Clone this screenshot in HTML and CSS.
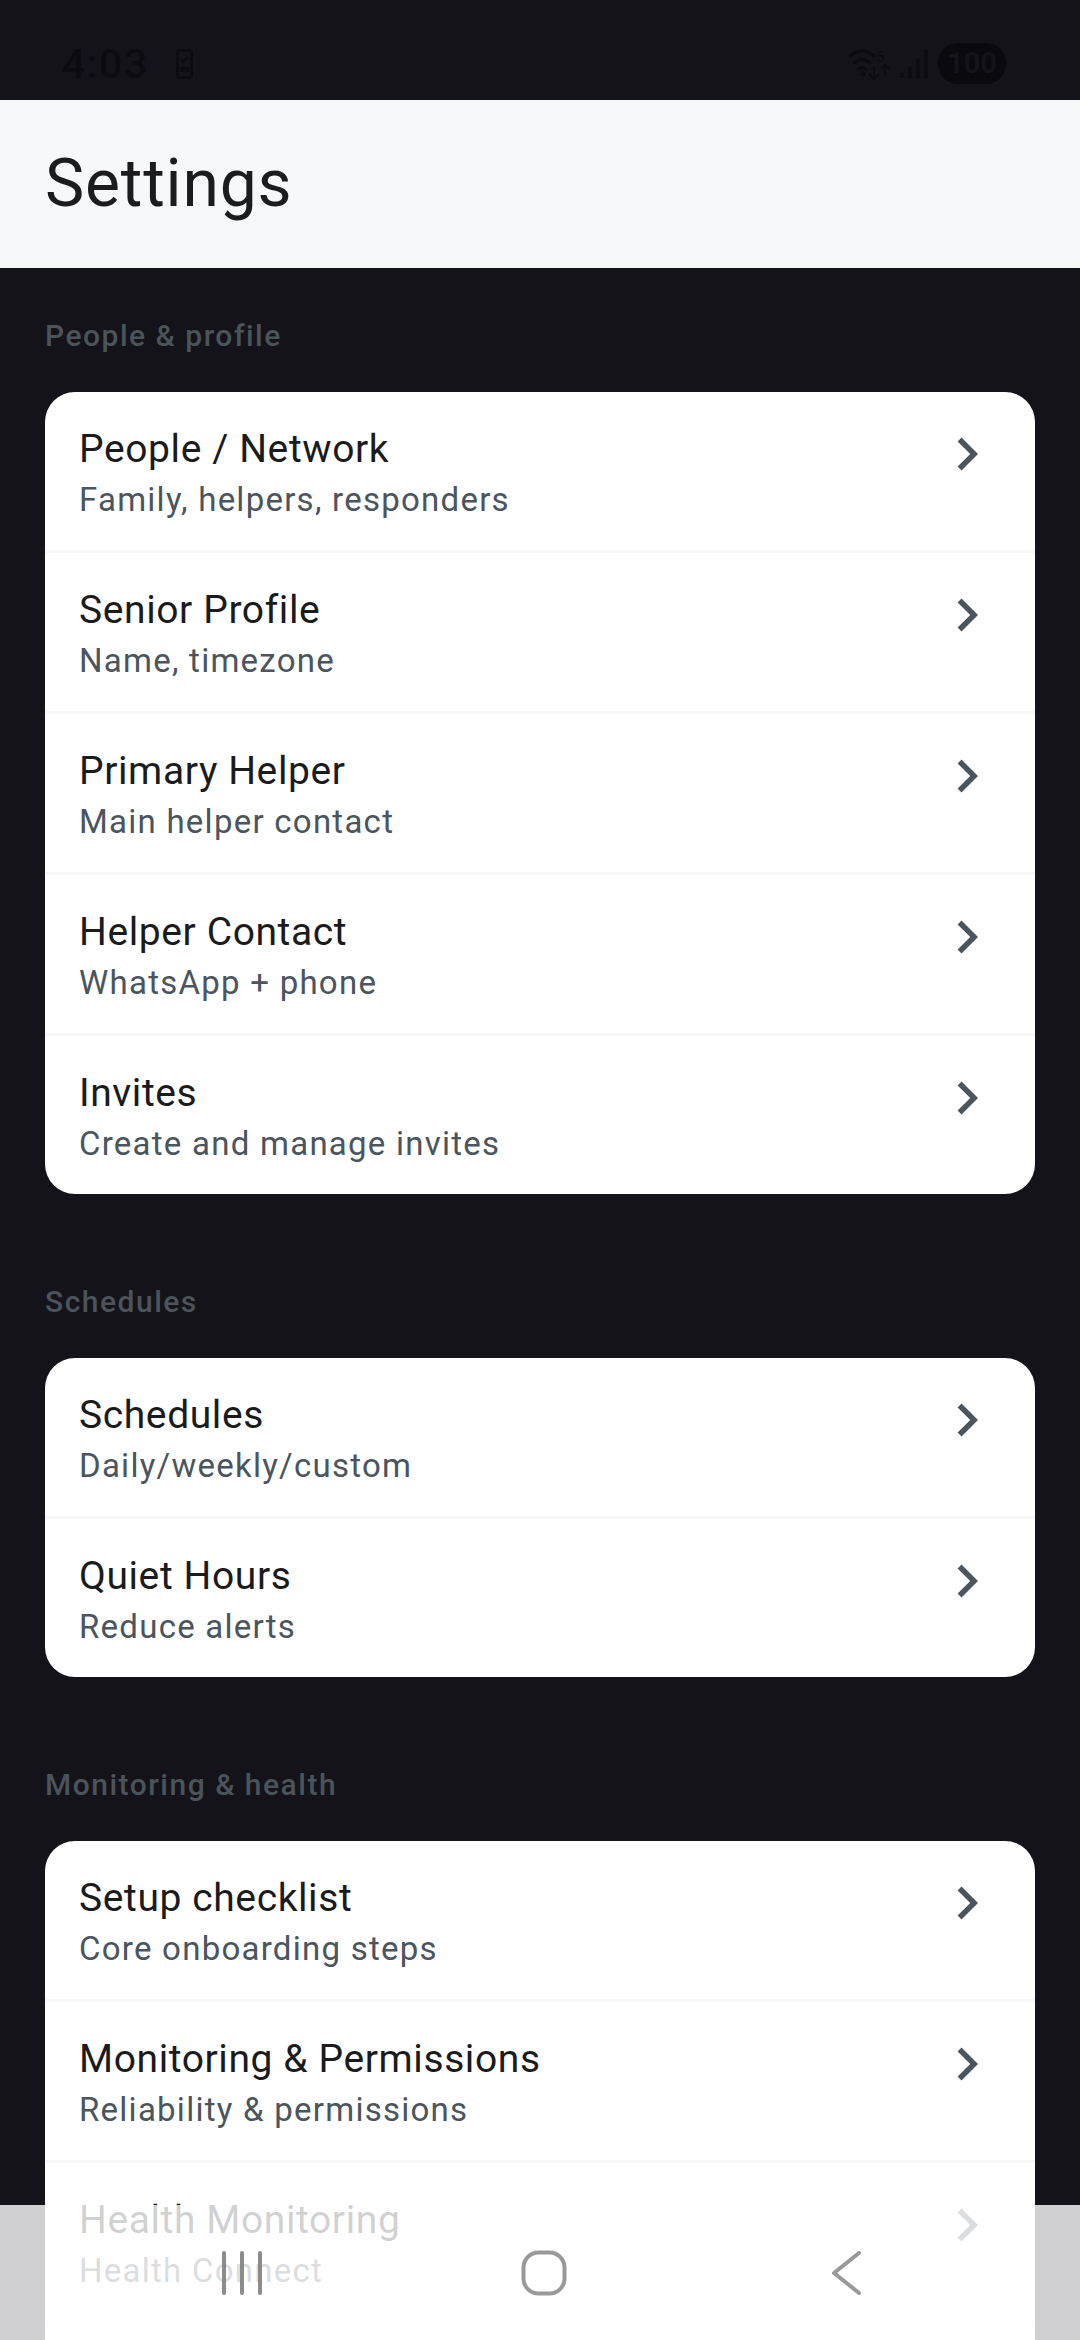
FILE: index.html
```html
<!DOCTYPE html>
<html lang="en">
	<head>
		<title>Settings</title>
		<meta charset="utf-8" />
		<link rel="stylesheet" href="styles.css">
	</head>

	<body>
		<div class="screen">
			<!-- status bar, icons nearly same colour as the background -->
			<div class="status">
				<div class="status-left">
					<span class="time">4:03</span>
					<svg class="phone-icon" width="17" height="30" viewBox="0 0 17 30">
						<rect x="1.5" y="1.5" width="14" height="27" rx="2.5" fill="none" stroke="#0c0b10" stroke-width="3" />
						<path d="M5 10l2.5 2.5L12 8" fill="none" stroke="#0c0b10" stroke-width="2" />
						<path d="M4 18h9v5H4z" fill="#0c0b10" />
					</svg>
				</div>
				<div class="status-right">
					<svg width="42" height="32" viewBox="0 0 42 32">
						<path d="M1 9Q14-3 27 9M5.500 16Q14 7 22.500 16M10 22Q14.500 17 19 22" fill="none" stroke="#0c0b10" stroke-width="3" />
						<circle cx="15" cy="26" r="2.500" fill="#0c0b10" />
						<text class="wifi-five" x="28" y="14">5</text>
						<path d="M26 18v13m-5-5l5 5 5-5M37 29V17m-4 4l4-4 4 4" fill="none" stroke="#0c0b10" stroke-width="2" />
					</svg>
					<svg width="28" height="28" viewBox="0 0 28 28">
						<path d="M2 23v5M10 17v11M18 9v19M26 0v28" fill="none" stroke="#0c0b10" stroke-width="3.500" />
					</svg>
					<span class="battery">100</span>
				</div>
			</div>

			<div class="header">Settings</div>

			<div class="section-label first">People &amp; profile</div>
			<div class="card">
				<div class="row">
					<div class="row-text"><div class="title">People / Network</div><div class="sub">Family, helpers, responders</div></div>
					<svg class="chev" viewBox="0 0 24 24"><path d="M10 6L8.59 7.41 13.17 12l-4.58 4.59L10 18l6-6z" /></svg>
				</div>
				<div class="row">
					<div class="row-text"><div class="title">Senior Profile</div><div class="sub">Name, timezone</div></div>
					<svg class="chev" viewBox="0 0 24 24"><path d="M10 6L8.59 7.41 13.17 12l-4.58 4.59L10 18l6-6z" /></svg>
				</div>
				<div class="row">
					<div class="row-text"><div class="title">Primary Helper</div><div class="sub">Main helper contact</div></div>
					<svg class="chev" viewBox="0 0 24 24"><path d="M10 6L8.59 7.41 13.17 12l-4.58 4.59L10 18l6-6z" /></svg>
				</div>
				<div class="row">
					<div class="row-text"><div class="title">Helper Contact</div><div class="sub">WhatsApp + phone</div></div>
					<svg class="chev" viewBox="0 0 24 24"><path d="M10 6L8.59 7.41 13.17 12l-4.58 4.59L10 18l6-6z" /></svg>
				</div>
				<div class="row">
					<div class="row-text"><div class="title">Invites</div><div class="sub">Create and manage invites</div></div>
					<svg class="chev" viewBox="0 0 24 24"><path d="M10 6L8.59 7.41 13.17 12l-4.58 4.59L10 18l6-6z" /></svg>
				</div>
			</div>

			<div class="section-label">Schedules</div>
			<div class="card">
				<div class="row">
					<div class="row-text"><div class="title">Schedules</div><div class="sub">Daily/weekly/custom</div></div>
					<svg class="chev" viewBox="0 0 24 24"><path d="M10 6L8.59 7.41 13.17 12l-4.58 4.59L10 18l6-6z" /></svg>
				</div>
				<div class="row">
					<div class="row-text"><div class="title">Quiet Hours</div><div class="sub">Reduce alerts</div></div>
					<svg class="chev" viewBox="0 0 24 24"><path d="M10 6L8.59 7.41 13.17 12l-4.58 4.59L10 18l6-6z" /></svg>
				</div>
			</div>

			<div class="section-label">Monitoring &amp; health</div>
			<div class="card">
				<div class="row">
					<div class="row-text"><div class="title">Setup checklist</div><div class="sub">Core onboarding steps</div></div>
					<svg class="chev" viewBox="0 0 24 24"><path d="M10 6L8.59 7.41 13.17 12l-4.58 4.59L10 18l6-6z" /></svg>
				</div>
				<div class="row">
					<div class="row-text"><div class="title">Monitoring &amp; Permissions</div><div class="sub">Reliability &amp; permissions</div></div>
					<svg class="chev" viewBox="0 0 24 24"><path d="M10 6L8.59 7.41 13.17 12l-4.58 4.59L10 18l6-6z" /></svg>
				</div>
				<div class="row">
					<div class="row-text"><div class="title">Health Monitoring</div><div class="sub">Health Connect</div></div>
					<svg class="chev" viewBox="0 0 24 24"><path d="M10 6L8.59 7.41 13.17 12l-4.58 4.59L10 18l6-6z" /></svg>
				</div>
				<!-- list carries on below the fold -->
				<div class="row"></div>
			</div>

			<!-- translucent nav bar sits over the list -->
			<div class="navbar">
				<svg width="44" height="46" viewBox="0 0 44 46"><path d="M4 3v40M22 3v40M40 3v40" fill="none" stroke="#808080" stroke-opacity="0.9" stroke-width="4" stroke-linecap="round" /></svg>
				<svg width="46" height="46" viewBox="0 0 46 46"><rect x="2.500" y="2.500" width="41" height="41" rx="15" fill="none" stroke="#999" stroke-width="4" /></svg>
				<svg width="32" height="46" viewBox="0 0 32 46"><path d="M29 3L4 23l25 20" fill="none" stroke="#999" stroke-width="4" stroke-linecap="round" stroke-linejoin="round" /></svg>
			</div>
		</div>
	</body>
</html>
```

FILE: styles.css
```css
/* whole page is one phone screen */
body {
	margin: 0;
	background: #14131a;
	font-family: Roboto, "Noto Sans", sans-serif;
}

.screen {
	position: relative;
	height: 2340px;
	overflow: hidden;
	background: #14131a;
}

/* status bar */
.status {
	height: 100px;
	box-sizing: border-box;
	padding: 41px 74px 0 62px;
	display: flex;
	justify-content: space-between;
	align-items: flex-start;
	color: #0c0b10;
}

.status-left {
	display: flex;
	align-items: center;
	gap: 27px;
}

.time {
	font-size: 41px;
	font-weight: 500;
	line-height: 46px;
	letter-spacing: 1.5px;
}

.status-right {
	display: flex;
	align-items: center;
	gap: 10px;
	margin-top: 2px;
}

.wifi-five {
	font-family: Roboto, sans-serif;
	font-size: 15px;
	fill: #0c0b10;
}

.battery {
	background: #0a090d;
	color: #14131a;
	font-size: 29px;
	font-weight: 700;
	line-height: 41px;
	width: 68px;
	text-align: center;
	border-radius: 20px;
}

/* header */
.header {
	height: 168px;
	background: #f7f8fa;
	color: #1c1c1e;
	font-size: 66px;
	letter-spacing: 0.8px;
	line-height: 168px;
	padding-left: 45px;
}

.section-label {
	margin: 85px 0 34px 45px;
	font-size: 30px;
	font-weight: 500;
	line-height: 45px;
	letter-spacing: 1.5px;
	color: #4a5459;
}

.section-label.first {
	margin-top: 45px;
}

/* cards */
.card {
	margin: 0 45px;
	background: #fff;
	border-radius: 30px;
	overflow: hidden;
}

.row {
	display: flex;
	justify-content: space-between;
	align-items: flex-start;
	padding: 29px 35px 0 34px;
	border-bottom: 3px solid #f7f8fa;
	height: 161px;
	box-sizing: border-box;
}

.row:last-child {
	border-bottom: none;
	height: 158px;
}

.title {
	font-size: 39px;
	line-height: 56px;
	letter-spacing: 0.6px;
	color: #1a1b1d;
}

.sub {
	font-size: 33px;
	line-height: 46px;
	letter-spacing: 1.25px;
	color: #4a555e;
}

.chev {
	width: 66px;
	height: 66px;
	fill: #4a555e;
	flex: none;
}

/* nav bar */
.navbar {
	position: absolute;
	left: 0;
	right: 0;
	bottom: 0;
	height: 135px;
	background: rgba(255, 255, 255, 0.8);
	display: grid;
	grid-template-columns: 302px 302px 302px;
	place-items: center;
	padding-left: 91px;
	box-sizing: border-box;
}
```
